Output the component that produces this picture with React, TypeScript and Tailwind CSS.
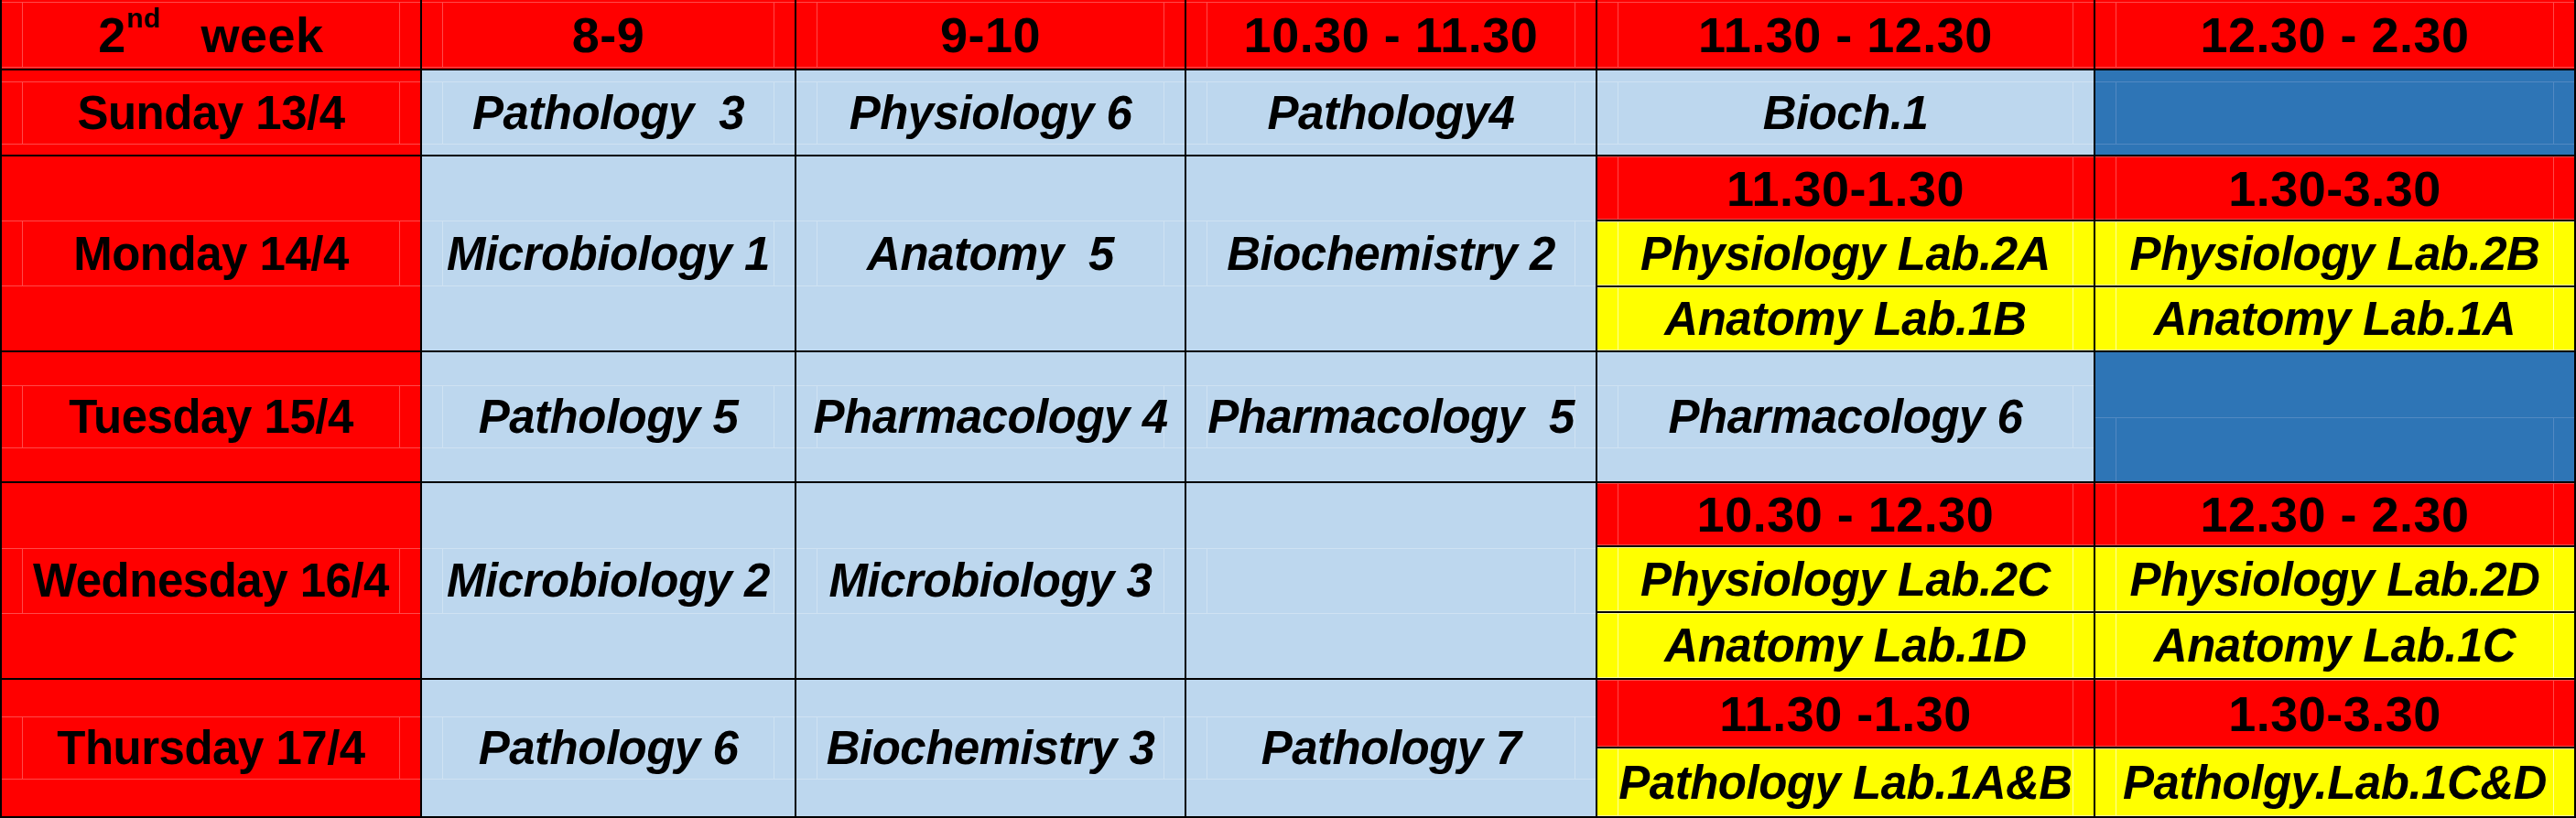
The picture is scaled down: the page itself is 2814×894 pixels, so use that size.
import type { ReactNode } from 'react';

type Tone = 'red' | 'light' | 'dark' | 'yellow';

const toneClass: Record<Tone, string> = {
  red: 'bg-[#ff0000]',
  light: 'bg-[#bdd7ee]',
  dark: 'bg-[#2e75b6]',
  yellow: 'bg-[#ffff00]',
};

const faintClass: Record<Tone, string> = {
  red: 'border-[#ff4a4a]',
  light: 'border-[#cfe2f2]',
  dark: 'border-[#5289c2]',
  yellow: 'border-[#ffff9a]',
};

interface CellProps {
  tone: Tone;
  italic?: boolean;
  className?: string;
  boxHeight?: string;
  size?: string;
  children?: ReactNode;
}

const Cell = ({
  tone,
  italic = true,
  className = '',
  boxHeight = 'h-[69px]',
  size = 'text-[51px]',
  children,
}: CellProps) => (
  <div className={`${toneClass[tone]} flex items-center ${className}`}>
    <div className={`w-full border-y ${faintClass[tone]} ${boxHeight}`}>
      <div
        className={`mx-[22px] flex h-full items-center justify-center whitespace-pre border-x ${faintClass[tone]} ${size} font-bold leading-none tracking-[-0.5px] text-black ${italic ? 'italic' : ''}`}
      >
        {children}
      </div>
    </div>
  </div>
);

const Time = ({ boxHeight = 'h-[72px]', children }: { boxHeight?: string; children: ReactNode }) => (
  <Cell tone="red" italic={false} boxHeight={boxHeight} size="text-[54px] tracking-[0.5px]">
    {children}
  </Cell>
);

const App = () => {
  return (
    <div
      className="grid h-[894px] w-[2814px] bg-black px-[2px] pb-[2px]"
      style={{ fontFamily: '"Liberation Sans", Arial, sans-serif' }}
    >
      <div className="grid grid-cols-[457px_407px_424px_447px_542px_523px] grid-rows-[75px_92px_69px_70px_69px_141px_68px_70px_71px_73px_74px] gap-[2px]">
        {/* header */}
        <Time>
          <span className="flex items-start">
            <span>2</span>
            <span className="-mt-[6px] text-[30px]">nd</span>
            <span className="ml-[44px]">week</span>
          </span>
        </Time>
        <Time>8-9</Time>
        <Time>9-10</Time>
        <Time>10.30 - 11.30</Time>
        <Time>11.30 - 12.30</Time>
        <Time>12.30 - 2.30</Time>

        {/* Sunday */}
        <Cell tone="red" italic={false}>Sunday 13/4</Cell>
        <Cell tone="light">Pathology  3</Cell>
        <Cell tone="light">Physiology 6</Cell>
        <Cell tone="light">Pathology4</Cell>
        <Cell tone="light">Bioch.1</Cell>
        <Cell tone="dark" />

        {/* Monday */}
        <Cell tone="red" italic={false} className="row-span-3" boxHeight="h-[72px]">Monday 14/4</Cell>
        <Cell tone="light" className="row-span-3" boxHeight="h-[72px]">Microbiology 1</Cell>
        <Cell tone="light" className="row-span-3" boxHeight="h-[72px]">Anatomy  5</Cell>
        <Cell tone="light" className="row-span-3" boxHeight="h-[72px]">Biochemistry 2</Cell>
        <Time boxHeight="h-[69px]">11.30-1.30</Time>
        <Time boxHeight="h-[69px]">1.30-3.30</Time>
        <Cell tone="yellow" boxHeight="h-[70px]">Physiology Lab.2A</Cell>
        <Cell tone="yellow" boxHeight="h-[70px]">Physiology Lab.2B</Cell>
        <Cell tone="yellow" boxHeight="h-[69px]">Anatomy Lab.1B</Cell>
        <Cell tone="yellow" boxHeight="h-[69px]">Anatomy Lab.1A</Cell>

        {/* Tuesday */}
        <Cell tone="red" italic={false}>Tuesday 15/4</Cell>
        <Cell tone="light">Pathology 5</Cell>
        <Cell tone="light">Pharmacology 4</Cell>
        <Cell tone="light">Pharmacology  5</Cell>
        <Cell tone="light">Pharmacology 6</Cell>
        <Cell tone="dark" boxHeight="h-[70px] mt-[70px] border-b-0" />

        {/* Wednesday */}
        <Cell tone="red" italic={false} className="row-span-3" boxHeight="h-[72px]">Wednesday 16/4</Cell>
        <Cell tone="light" className="row-span-3" boxHeight="h-[72px]">Microbiology 2</Cell>
        <Cell tone="light" className="row-span-3" boxHeight="h-[72px]">Microbiology 3</Cell>
        <Cell tone="light" className="row-span-3" boxHeight="h-[72px]" />
        <Time boxHeight="h-[68px]">10.30 - 12.30</Time>
        <Time boxHeight="h-[68px]">12.30 - 2.30</Time>
        <Cell tone="yellow" boxHeight="h-[70px]">Physiology Lab.2C</Cell>
        <Cell tone="yellow" boxHeight="h-[70px]">Physiology Lab.2D</Cell>
        <Cell tone="yellow" boxHeight="h-[71px]">Anatomy Lab.1D</Cell>
        <Cell tone="yellow" boxHeight="h-[71px]">Anatomy Lab.1C</Cell>

        {/* Thursday */}
        <Cell tone="red" italic={false} className="row-span-2">Thursday 17/4</Cell>
        <Cell tone="light" className="row-span-2">Pathology 6</Cell>
        <Cell tone="light" className="row-span-2">Biochemistry 3</Cell>
        <Cell tone="light" className="row-span-2">Pathology 7</Cell>
        <Time boxHeight="h-[73px]">11.30 -1.30</Time>
        <Time boxHeight="h-[73px]">1.30-3.30</Time>
        <Cell tone="yellow" boxHeight="h-[74px]">Pathology Lab.1A&amp;B</Cell>
        <Cell tone="yellow" boxHeight="h-[74px]">Patholgy.Lab.1C&amp;D</Cell>
      </div>
    </div>
  );
};

export default App;
